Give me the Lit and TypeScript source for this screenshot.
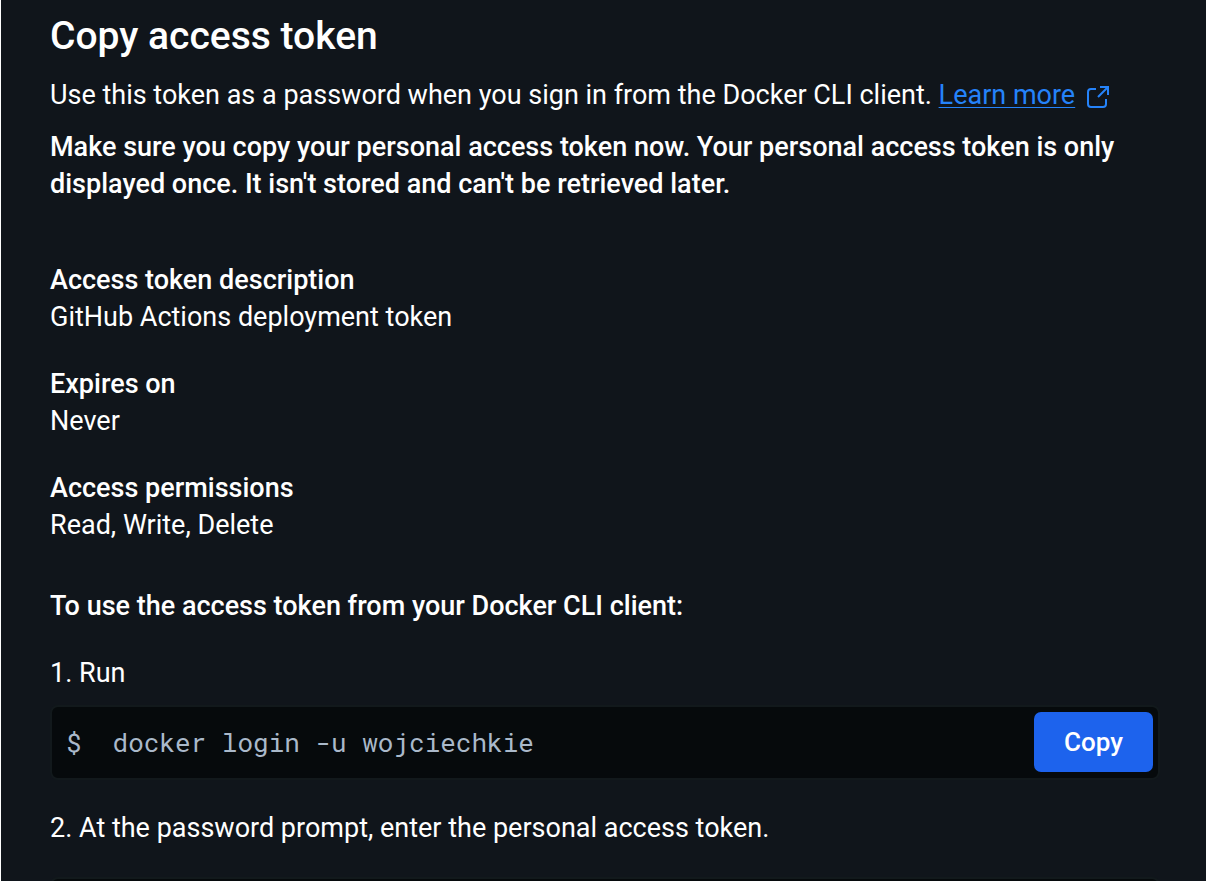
import { LitElement, html, css } from "lit";
import { customElement } from "lit/decorators.js";

@customElement("app-root")
export class AppRoot extends LitElement {
  static styles = css`
    :host { display: block; min-height: 100vh; box-sizing: border-box; background: #10151b; color: #fff;
      border-left: 1px solid #fff; font: 400 27px/37px Roboto, sans-serif; }
    * { box-sizing: border-box; }
    main { padding: 12px 46px 0 49px; }
    h1, p, dl, dd, h2 { margin: 0; font-size: inherit; }
    h1 { font-size: 39px; line-height: 48px; font-weight: 500; }
    .intro { margin-top: 17px; }
    a { color: #2583fa; text-underline-offset: 3px; text-decoration-thickness: 1px; }
    .ext { width: 24px; height: 24px; margin-left: 4px; vertical-align: -5px; }
    .strong, dt, h2 { font-weight: 500; }
    .warn { margin-top: 15px; }
    dl { margin-top: 59px; display: grid; gap: 30px; }
    h2 { margin-top: 44px; }
    .step { margin-top: 30px; }
    .code { margin-top: 13px; min-height: 75px; display: flex; align-items: center; gap: 31px; padding: 3px 5px 4px 14px;
      border: 2px solid #12191c; border-radius: 8px; background: #060a0c; color: #aab9ca;
      font-family: "Roboto Mono", "Liberation Mono", monospace; font-size: 26px; line-height: 36px; }
    .token { margin-top: 30px; }
    code { flex: 1; font: inherit; }
    button { width: 119px; height: 60px; border: 0; border-radius: 7px; background: #1d63ed; color: #fff;
      font: 500 26px/37px Roboto, sans-serif; cursor: pointer; }
  `;
  render() {
    return html`<main>
      <h1>Copy access token</h1>
      <p class="intro">Use this token as a password when you sign in from the Docker CLI client. <a href="#">Learn more</a>
        <svg class="ext" viewBox="0 0 24 24" fill="none" stroke="#2583fa" stroke-width="2" aria-hidden="true"><path d="M10 4H5Q2 4 2 7V19Q2 22 5 22H17Q20 22 20 19V14M14 2H22V10M22 2L12 12"/></svg></p>
      <p class="strong warn">Make sure you copy your personal access token now. Your personal access token is only displayed once. It isn't stored and can't be retrieved later.</p>
      <dl>
        <div><dt>Access token description</dt><dd>GitHub Actions deployment token</dd></div>
        <div><dt>Expires on</dt><dd>Never</dd></div>
        <div><dt>Access permissions</dt><dd>Read, Write, Delete</dd></div>
      </dl>
      <h2>To use the access token from your Docker CLI client:</h2>
      <p class="step">1. Run</p>
      <div class="code"><span>$</span><code>docker login -u wojciechkie</code><button type="button">Copy</button></div>
      <p class="step">2. At the password prompt, enter the personal access token.</p>
      <div class="code token"></div>
    </main>`;
  }
}
